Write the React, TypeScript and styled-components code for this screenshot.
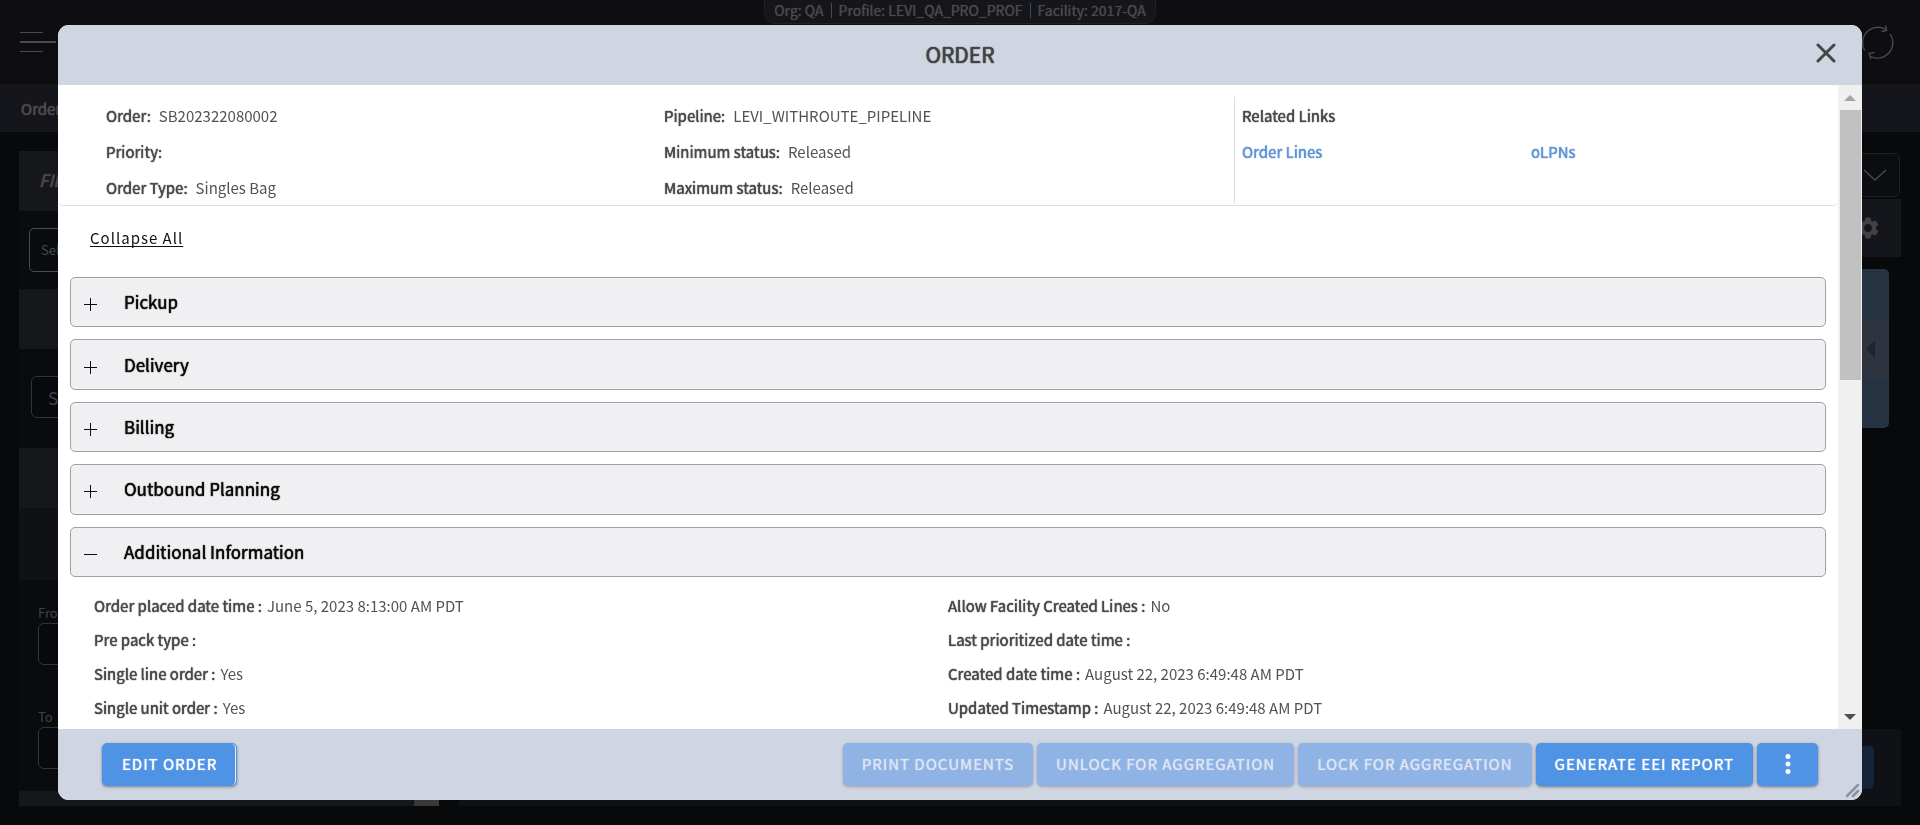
import React from "react";
import styled, { createGlobalStyle, css } from "styled-components";

const GlobalStyle = createGlobalStyle`
  *, *::before, *::after { box-sizing: border-box; }
  body {
    margin: 0;
    background: #08090b;
    color: #4a4a4a;
    font-family: "Noto Sans CJK SC", "Noto Sans", sans-serif;
    font-size: 15px;
    line-height: 24px;
  }
  button, input, select { font: inherit; }
`;

/* regular cut thickened with a soft edge, used for labels and headings */
const strong = css`
  font-weight: 400;
  text-shadow: 0 0 1px currentColor, 0 0 1px currentColor;
`;

/* ---------- application shell behind the dialog ---------- */

const Shell = styled.div`
  min-height: 100vh;
  display: flex;
  flex-direction: column;
`;

const TopBar = styled.header`
  height: 84px;
  flex: none;
  display: grid;
  grid-template-columns: 1fr auto 1fr;
  align-items: start;
  padding: 0 20px;
  background: #0e0d12;
`;

const IconButton = styled.button`
  display: flex;
  padding: 0;
  border: 0;
  background: none;
  color: inherit;
`;

const MenuButton = styled(IconButton)`
  margin-top: 32px;
  color: #4a4a4a;
`;

const RefreshButton = styled(IconButton)`
  justify-self: end;
  margin: 24px 5px 0 0;
  color: #4b4b4c;
`;

const Context = styled.div`
  display: flex;
  height: 24px;
  padding: 0 9px;
  border: 1px solid #212226;
  border-top: 0;
  border-radius: 0 0 12px 12px;
  background: #15161b;
  color: #4a4a4b;
  font-size: 14px;
  line-height: 20px;
  white-space: nowrap;
  text-shadow: 0 0 1px currentColor;
`;

const ContextItem = styled.span`
  & + &::before {
    content: "";
    display: inline-block;
    width: 1px;
    height: 15px;
    margin: 0 7px;
    vertical-align: -2px;
    background: #4a4a4b;
  }
`;

const TabBar = styled.nav`
  height: 48px;
  flex: none;
  padding: 13px 21px;
  background: #15161b;
  color: #4a4a4a;
  ${strong}
`;

const Workspace = styled.div`
  flex: 1;
  display: flex;
  gap: 19px;
  padding: 19px;
`;

const Filters = styled.aside`
  width: 420px;
  flex: none;
  display: flex;
  flex-direction: column;
  background: #090b0f;
`;

const Band = styled.div<{ $h: number; $dim?: boolean }>`
  height: ${(p) => p.$h}px;
  flex: none;
  background: ${(p) => (p.$dim ? "#0f1115" : "#15171b")};
`;

const FilterTitle = styled(Band)`
  padding: 17px 20px;
  color: #484848;
  font-size: 17px;
  font-style: italic;
  ${strong}
`;

const FilterGroup = styled.div<{ $pad: string }>`
  padding: ${(p) => p.$pad};
`;

const DarkSelect = styled.select`
  display: block;
  width: 100%;
  height: 44px;
  padding: 0 11px;
  appearance: none;
  border: 1px solid #4c4c4d;
  border-radius: 5px;
  background: #090b0f;
  color: #4a4a4a;
  font-size: 13px;
`;

const DarkInput = styled.input`
  display: block;
  width: 100%;
  height: 42px;
  padding: 0 16px;
  border: 1px solid #333436;
  border-radius: 6px;
  background: #08090d;
  font-size: 17px;
  &::placeholder { color: #404041; }
`;

const Dates = styled.div`
  flex: 1;
  display: flex;
  flex-direction: column;
  gap: 42px;
  padding: 23px 19px 0;
`;

const DateField = styled.label`
  color: #434344;
  font-size: 13px;
  line-height: 20px;
`;

const FilterFoot = styled(Band)`
  display: flex;
  justify-content: flex-end;
  &::after {
    content: "";
    width: 25px;
    background: #383838;
  }
`;

const Results = styled.main`
  flex: 1;
  display: flex;
  flex-direction: column;
`;

const SortRow = styled.div`
  height: 48px;
  padding: 2px 1px 2px 0;
  display: flex;
  justify-content: flex-end;
`;

const SortBox = styled.button`
  width: 220px;
  display: flex;
  align-items: center;
  justify-content: flex-end;
  padding: 0 12px;
  border: 1px solid #202124;
  border-radius: 5px;
  background: #0c0d11;
  color: #48494a;
`;

const ToolRow = styled.div`
  height: 58px;
  display: flex;
  justify-content: flex-end;
  align-items: center;
  padding-right: 22px;
  background: #15161b;
  color: #424243;
`;

const Card = styled.div`
  height: 159px;
  margin: 12px 12px 0 0;
  padding: 50px 0;
  border-radius: 5px;
  background: #253342;
`;

const CardHandle = styled.div`
  height: 60px;
  display: flex;
  align-items: center;
  justify-content: flex-end;
  padding-right: 14px;
  background: #2e343f;
  color: #20242c;
`;

const ResultsFoot = styled.div`
  height: 77px;
  margin-top: auto;
  display: flex;
  justify-content: flex-end;
  padding: 17px 27px;
  background: #101117;
`;

const DarkButton = styled.button`
  width: 120px;
  border: 0;
  border-radius: 5px;
  background: #14243b;
`;

/* ---------- dialog ---------- */

const Dialog = styled.section`
  position: fixed;
  inset: 25px 58px;
  display: flex;
  flex-direction: column;
  overflow: hidden;
  border-radius: 11px;
  background: #fff;
  color: #4a4a4a;
`;

const DialogHead = styled.header`
  height: 60px;
  flex: none;
  display: grid;
  grid-template-columns: 1fr auto 1fr;
  align-items: center;
  padding: 0 26px;
  background: #cfd5e1;
`;

const DialogTitle = styled.h1`
  grid-column: 2;
  margin: 0;
  padding-bottom: 2px;
  color: #444;
  font-size: 21px;
  line-height: 28px;
  ${strong}
`;

const CloseButton = styled(IconButton)`
  justify-self: end;
  padding-bottom: 4px;
  color: #454545;
`;

const DialogBody = styled.div`
  flex: 1;
  min-height: 0;
  display: flex;
`;

const Content = styled.div`
  flex: 1;
  min-width: 0;
  overflow: auto;
  scrollbar-width: none;
`;

const Summary = styled.div`
  display: grid;
  grid-template-columns: 558fr 570fr 604fr;
  padding: 12px 0 2px 48px;
  border-bottom: 1px solid #dcdddf;
  border-radius: 0 0 5px 5px;
`;

const SummaryColumn = styled.dl`
  display: flex;
  flex-direction: column;
  gap: 12px;
  margin: 0;
  padding: 7px 0 3px;
`;

const Field = styled.div<{ $gap: number }>`
  display: flex;
  gap: ${(p) => p.$gap}px;
  white-space: nowrap;
`;

const Term = styled.dt`
  ${strong}
`;

const Value = styled.dd`
  margin: 0;
  color: #525252;
`;

const Related = styled.nav`
  display: flex;
  flex-direction: column;
  gap: 12px;
  padding: 7px 18px 3px 7px;
  border-left: 1px solid #dcdddf;
`;

const RelatedTitle = styled.h2`
  margin: 0;
  font-size: 15px;
  line-height: 24px;
  ${strong}
`;

const RelatedLinks = styled.div`
  display: grid;
  grid-template-columns: 1fr 1fr;
`;

const Link = styled.a`
  color: #5e95d2;
  text-decoration: none;
  ${strong}
`;

const CollapseAll = styled.button`
  display: block;
  margin: 20px 32px 27px;
  padding: 0;
  border: 0;
  background: none;
  color: #111;
  letter-spacing: 1px;
  text-decoration: underline;
  text-decoration-skip-ink: none;
  text-underline-offset: 2px;
`;

const Sections = styled.div`
  display: grid;
  grid-auto-rows: 1fr;
  gap: 12px;
  min-height: 300px;
  margin: 0 12px;
`;

const SectionButton = styled.button`
  display: flex;
  align-items: center;
  gap: 27px;
  padding: 0 13px;
  border: 1px solid #a0a1a6;
  border-radius: 5px;
  background: #f0f0f3;
  color: #0c0c0c;
  font-size: 17px;
  ${strong}
  svg { margin-top: 5px; }
`;

const DetailList = styled.dl`
  display: grid;
  grid-template-columns: 1fr 1fr;
  gap: 10px 0;
  margin: 0;
  padding: 17px 36px 10px;
`;

const Track = styled.div`
  width: 24px;
  flex: none;
  display: flex;
  flex-direction: column;
  background: #f0f0f0;
`;

const Arrow = styled.div<{ $down?: boolean }>`
  height: 25px;
  display: flex;
  align-items: center;
  justify-content: center;
  color: ${(p) => (p.$down ? "#505050" : "#a3a3a3")};
  ${(p) => p.$down && css`margin-top: auto;`}
`;

const Thumb = styled.div`
  height: 270px;
  margin: 0 1px 0 2px;
  background: #c1c1c1;
`;

const DialogFoot = styled.footer`
  height: 71px;
  flex: none;
  display: flex;
  justify-content: space-between;
  padding: 14px 44px;
  background: #cfd5e1;
`;

const Actions = styled.div`
  display: flex;
  gap: 4px;
`;

const ActionButton = styled.button<{ $outlined?: boolean }>`
  display: flex;
  align-items: center;
  justify-content: center;
  height: 43px;
  min-width: 61px;
  padding: 0 19px 2px;
  border: 0;
  border-radius: 5px;
  background: #4f93e5;
  color: #fff;
  font-size: 15px;
  letter-spacing: 1px;
  white-space: nowrap;
  text-shadow: 0 0 1px currentColor;
  box-shadow: 0 1px 3px rgba(0, 0, 0, 0.45);
  &:disabled {
    background: #8fb3e4;
    color: #dfe6f2;
    box-shadow: 0 1px 3px rgba(0, 0, 0, 0.25);
  }
  ${(p) =>
    p.$outlined &&
    css`
      border: 1px solid #4f93e5;
      box-shadow: inset -1px 0 0 #e6f0fb, 0 1px 3px rgba(0, 0, 0, 0.4);
    `}
`;

const ResizeGrip = styled.svg`
  position: absolute;
  right: 2px;
  bottom: 2px;
`;

type Pair = [string, string];

const orderFields: Pair[] = [
  ["Order:", "SB202322080002"],
  ["Priority:", ""],
  ["Order Type:", "Singles Bag"],
];

const statusFields: Pair[] = [
  ["Pipeline:", "LEVI_WITHROUTE_PIPELINE"],
  ["Minimum status:", "Released"],
  ["Maximum status:", "Released"],
];

const sections = [
  { title: "Pickup", open: false },
  { title: "Delivery", open: false },
  { title: "Billing", open: false },
  { title: "Outbound Planning", open: false },
  { title: "Additional Information", open: true },
];

const details: Pair[] = [
  ["Order placed date time :", "June 5, 2023 8:13:00 AM PDT"],
  ["Allow Facility Created Lines :", "No"],
  ["Pre pack type :", ""],
  ["Last prioritized date time :", ""],
  ["Single line order :", "Yes"],
  ["Created date time :", "August 22, 2023 6:49:48 AM PDT"],
  ["Single unit order :", "Yes"],
  ["Updated Timestamp :", "August 22, 2023 6:49:48 AM PDT"],
];

const SummaryFields = ({ fields }: { fields: Pair[] }) => (
  <SummaryColumn>
    {fields.map(([term, value]) => (
      <Field key={term} $gap={8}>
        <Term>{term}</Term>
        <Value>{value}</Value>
      </Field>
    ))}
  </SummaryColumn>
);

const ToggleIcon = ({ open }: { open: boolean }) => (
  <svg width="13" height="13" viewBox="0 0 13 13" stroke="#0c0c0c" aria-hidden="true">
    <path d={open ? "M0 6.5h13" : "M0 6.5h13M6.5 0v13"} />
  </svg>
);

const Background = () => (
  <Shell>
    <TopBar>
      <MenuButton aria-label="Menu">
        <svg width="36" height="20" viewBox="0 0 36 20" stroke="currentColor">
          <path d="M0 .5h23M0 19.5h23" />
          <path d="M0 10h36" strokeWidth="2" />
        </svg>
      </MenuButton>
      <Context>
        <ContextItem>Org: QA</ContextItem>
        <ContextItem>Profile: LEVI_QA_PRO_PROF</ContextItem>
        <ContextItem>Facility: 2017-QA</ContextItem>
      </Context>
      <RefreshButton aria-label="Refresh">
        <svg width="36" height="36" viewBox="0 0 36 36" fill="none" stroke="currentColor" strokeWidth="1.3">
          <path d="M5.700 26.500A15.500 15.500 0 0 1 27.500 5.700M31.200 10A15.500 15.500 0 0 1 11 32.300" />
          <path d="M26.500 1.500l1.200 5-5.200 1M12 35l-2-5.500 5.500-1" />
        </svg>
      </RefreshButton>
    </TopBar>
    <TabBar>Orders</TabBar>
    <Workspace>
      <Filters>
        <FilterTitle $h={60}>FILTERS</FilterTitle>
        <FilterGroup $pad="17px 10px">
          <DarkSelect aria-label="Saved filter">
            <option>Select</option>
          </DarkSelect>
        </FilterGroup>
        <Band $h={60} />
        <FilterGroup $pad="27px 12px 30px">
          <DarkInput aria-label="Search" placeholder="Search" />
        </FilterGroup>
        <Band $h={60} />
        <Band $h={72} $dim />
        <Dates>
          <DateField>
            From
            <DarkInput />
          </DateField>
          <DateField>
            To
            <DarkInput />
          </DateField>
        </Dates>
        <FilterFoot $h={15} />
      </Filters>
      <Results>
        <SortRow>
          <SortBox aria-label="Sort">
            <svg width="24" height="12" viewBox="0 0 24 12" fill="none" stroke="currentColor" strokeWidth="1.5">
              <path d="M1 1l11 10L23 1" />
            </svg>
          </SortBox>
        </SortRow>
        <ToolRow>
          <svg width="22" height="22" viewBox="2 2 20 20" fill="currentColor" aria-hidden="true">
            <path d="M19.14 12.94c.04-.3.06-.61.06-.94 0-.32-.02-.64-.07-.94l2.03-1.58c.18-.14.23-.41.12-.61l-1.92-3.32c-.12-.22-.37-.29-.59-.22l-2.39.96c-.5-.38-1.03-.7-1.62-.94l-.36-2.54c-.04-.24-.24-.41-.48-.41h-3.84c-.24 0-.43.17-.47.41l-.36 2.54c-.59.24-1.13.57-1.62.94l-2.39-.96c-.22-.08-.47 0-.59.22L2.74 8.87c-.12.21-.08.47.12.61l2.03 1.58c-.05.3-.09.63-.09.94s.02.64.07.94l-2.03 1.58c-.18.14-.23.41-.12.61l1.92 3.32c.12.22.37.29.59.22l2.39-.96c.5.38 1.03.7 1.62.94l.36 2.54c.05.24.24.41.48.41h3.84c.24 0 .44-.17.47-.41l.36-2.54c.59-.24 1.13-.56 1.62-.94l2.39.96c.22.08.47 0 .59-.22l1.92-3.32c.12-.22.07-.47-.12-.61l-2.01-1.58zM12 15.6c-1.98 0-3.6-1.62-3.6-3.6s1.62-3.6 3.6-3.6 3.6 1.62 3.6 3.6-1.62 3.6-3.6 3.6z" />
          </svg>
        </ToolRow>
        <Card>
          <CardHandle>
            <svg width="9" height="18" viewBox="0 0 9 18" fill="currentColor" aria-hidden="true">
              <path d="M9 0v18L0 9z" />
            </svg>
          </CardHandle>
        </Card>
        <ResultsFoot>
          <DarkButton aria-label="Actions" />
        </ResultsFoot>
      </Results>
    </Workspace>
  </Shell>
);

export default function App() {
  return (
    <>
      <GlobalStyle />
      <Background />
      <Dialog role="dialog" aria-labelledby="dialog-title">
        <DialogHead>
          <DialogTitle id="dialog-title">ORDER</DialogTitle>
          <CloseButton aria-label="Close">
            <svg width="20" height="20" viewBox="0 0 20 20" stroke="currentColor" strokeWidth="3" strokeLinecap="round">
              <path d="M2 2l16 16M18 2L2 18" />
            </svg>
          </CloseButton>
        </DialogHead>
        <DialogBody>
          <Content>
            <Summary>
              <SummaryFields fields={orderFields} />
              <SummaryFields fields={statusFields} />
              <Related>
                <RelatedTitle>Related Links</RelatedTitle>
                <RelatedLinks>
                  <Link href="#order-lines">Order Lines</Link>
                  <Link href="#olpns">oLPNs</Link>
                </RelatedLinks>
              </Related>
            </Summary>
            <CollapseAll>Collapse All</CollapseAll>
            <Sections>
              {sections.map(({ title, open }) => (
                <SectionButton key={title} aria-expanded={open}>
                  <ToggleIcon open={open} />
                  {title}
                </SectionButton>
              ))}
            </Sections>
            <DetailList>
              {details.map(([term, value]) => (
                <Field key={term} $gap={5}>
                  <Term>{term}</Term>
                  <Value>{value}</Value>
                </Field>
              ))}
            </DetailList>
          </Content>
          <Track aria-hidden="true">
            <Arrow>
              <svg width="12" height="6" viewBox="0 0 12 6" fill="currentColor">
                <path d="M6 0l6 6H0z" />
              </svg>
            </Arrow>
            <Thumb />
            <Arrow $down>
              <svg width="12" height="6" viewBox="0 0 12 6" fill="currentColor">
                <path d="M0 0h12L6 6z" />
              </svg>
            </Arrow>
          </Track>
        </DialogBody>
        <DialogFoot>
          <ActionButton $outlined>EDIT ORDER</ActionButton>
          <Actions>
            <ActionButton disabled>PRINT DOCUMENTS</ActionButton>
            <ActionButton disabled>UNLOCK FOR AGGREGATION</ActionButton>
            <ActionButton disabled>LOCK FOR AGGREGATION</ActionButton>
            <ActionButton>GENERATE EEI REPORT</ActionButton>
            <ActionButton aria-label="More actions">
              <svg width="6" height="20" viewBox="0 0 6 20" fill="currentColor">
                <circle cx="3" cy="2.5" r="2.5" />
                <circle cx="3" cy="10" r="2.5" />
                <circle cx="3" cy="17.5" r="2.5" />
              </svg>
            </ActionButton>
          </Actions>
        </DialogFoot>
        <ResizeGrip width="14" height="14" viewBox="0 0 14 14" stroke="#8b93a3" strokeWidth="2.500" strokeLinecap="round" aria-hidden="true">
          <path d="M1 12L12 1M7 12l5-5" />
        </ResizeGrip>
      </Dialog>
    </>
  );
}
